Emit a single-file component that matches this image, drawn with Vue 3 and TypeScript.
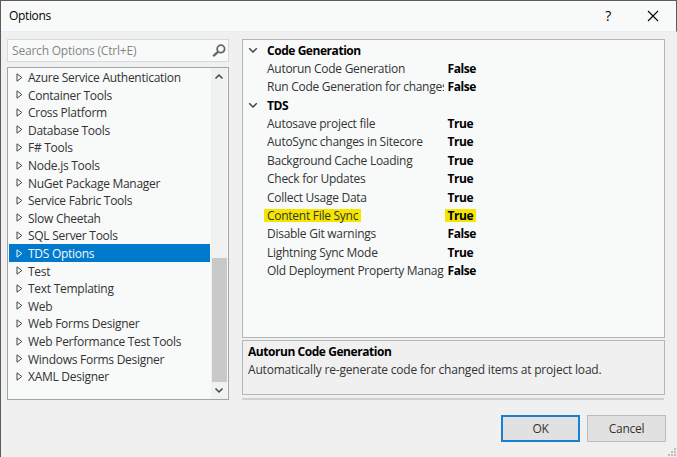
<script setup lang="ts">
interface Property { name: string; value?: string; group?: boolean; marked?: boolean }

const categories: string[] = [
  'Azure Service Authentication', 'Container Tools', 'Cross Platform', 'Database Tools', 'F# Tools',
  'Node.js Tools', 'NuGet Package Manager', 'Service Fabric Tools', 'Slow Cheetah', 'SQL Server Tools',
  'TDS Options', 'Test', 'Text Templating', 'Web', 'Web Forms Designer', 'Web Performance Test Tools',
  'Windows Forms Designer', 'XAML Designer',
]
const selected = 'TDS Options'

const properties: Property[] = [
  { name: 'Code Generation', group: true },
  { name: 'Autorun Code Generation', value: 'False' },
  { name: 'Run Code Generation for changes', value: 'False' },
  { name: 'TDS', group: true },
  { name: 'Autosave project file', value: 'True' },
  { name: 'AutoSync changes in Sitecore', value: 'True' },
  { name: 'Background Cache Loading', value: 'True' },
  { name: 'Check for Updates', value: 'True' },
  { name: 'Collect Usage Data', value: 'True' },
  { name: 'Content File Sync', value: 'True', marked: true },
  { name: 'Disable Git warnings', value: 'False' },
  { name: 'Lightning Sync Mode', value: 'True' },
  { name: 'Old Deployment Property Manag', value: 'False' },
]
</script>

<template>
  <div class="dialog">
    <header class="titlebar">
      <span class="title">Options</span>
      <span class="help">?</span>
      <svg class="close" width="12" height="12" viewBox="0 0 12 12"><path d="M1 1 11 11M11 1 1 11" /></svg>
    </header>
    <main class="content">
      <section class="left">
        <div class="search">
          <span>Search Options (Ctrl+E)</span>
          <svg width="14" height="14" viewBox="0 0 14 14"><circle cx="8.9" cy="4.9" r="3.7" /><path d="M6.3 7.6 1.2 12.2" /></svg>
        </div>
        <div class="tree">
          <ul class="items">
            <li v-for="c in categories" :key="c" :class="{ selected: c === selected }">
              <svg width="7" height="9" viewBox="0 0 7 9"><path d="M1 .8V8.2L5.8 4.5Z" /></svg>
              <span>{{ c }}</span>
            </li>
          </ul>
          <div class="scrollbar">
            <svg class="arrow" width="10" height="7" viewBox="0 0 10 7"><path d="M1.5 5.5 5 2 8.5 5.5" /></svg>
            <div class="thumb"></div>
            <svg class="arrow" width="10" height="7" viewBox="0 0 10 7"><path d="M1.5 1.5 5 5 8.5 1.5" /></svg>
          </div>
        </div>
      </section>
      <section class="right">
        <div class="grid">
          <div v-for="p in properties" :key="p.name" class="prop" :class="{ group: p.group }">
            <span class="gutter">
              <svg v-if="p.group" width="10" height="7" viewBox="0 0 10 7"><path d="M1.2 1.3 5 5 8.8 1.3" /></svg>
            </span>
            <span class="name"><span :class="{ mark: p.marked }">{{ p.name }}</span></span>
            <span v-if="p.value" class="value"><span :class="{ mark: p.marked }">{{ p.value }}</span></span>
          </div>
        </div>
        <div class="description">
          <strong>Autorun Code Generation</strong>
          <p>Automatically re-generate code for changed items at project load.</p>
        </div>
        <div class="rule"></div>
        <div class="buttons">
          <button class="ok">OK</button>
          <button>Cancel</button>
        </div>
      </section>
    </main>
    <svg class="grip" width="9" height="9" viewBox="0 0 9 9"><path d="M6 0h2v2h-2zM3 3h2v2h-2zM6 3h2v2h-2zM0 6h2v2h-2zM3 6h2v2h-2zM6 6h2v2h-2z" /></svg>
  </div>
</template>

<style>
body { overflow: hidden; }
</style>

<style scoped>
* { box-sizing: border-box; }
.dialog {
  position: relative; width: 677px; height: 457px; background: #f0f0f0; color: #333;
  border-top: 1px solid #5c5c5c; border-left: 1px solid #5c5c5c;
  font: 12px/17.6px "Open Sans", "Noto Sans", sans-serif; letter-spacing: -0.27px;
}
svg { flex: none; display: block; }
path, circle { fill: none; stroke: #444; stroke-width: 1.5; }
.titlebar {
  display: flex; align-items: center; height: 31px; padding: 0 17px 0 8px;
  background: #f8fafa; border-bottom: 1px solid #e8edf1; border-right: 1px solid #5c5c5c; color: #000;
}
.title { flex: 1; letter-spacing: -0.35px; }
.help { margin-right: 36px; font-size: 14px; }
.close path { stroke: #000; stroke-width: 1.1; }
.content { display: flex; padding-left: 6px; }
.left { width: 222px; padding-top: 7px; }
.search {
  display: flex; align-items: center; justify-content: space-between; height: 23px;
  padding: 0 2px 0 4px; background: #f8fafa; border: 1px solid #d5dae2; color: #858585; letter-spacing: -0.2px;
}
.search circle { stroke: #666; stroke-width: 1.8; }
.search path { stroke: #666; stroke-width: 2.4; }
.tree { display: flex; justify-content: space-between; height: 333px; margin-top: 5px; background: #f8f9f9; border: 1px solid #a0a5aa; }
.items { width: 202px; margin: 0; padding: 0.4px 0 0 1px; list-style: none; }
.items li { display: flex; align-items: center; height: 17.6px; padding-left: 7px; gap: 5px; white-space: nowrap; }
.items li span { padding-top: 1.4px; }
.items path { stroke-width: 1; }
.items .selected { background: #007acc; color: #f4f8fb; }
.items .selected path { stroke: #f4f8fb; }
.scrollbar { display: flex; flex-direction: column; align-items: center; width: 16px; padding: 5px 0; margin-right: 1px; background: #f0f1f1; }
.thumb { width: 15px; height: 124px; margin: auto 0 5px; background: #c9c9c9; }
.right { width: 423px; margin-left: 13px; padding-top: 7px; }
.grid { height: 299px; padding-top: 1.5px; background: #f8fafa; border: 1px solid #b4b7ba; }
.prop { display: flex; height: 18.4px; line-height: 18.4px; white-space: nowrap; }
.gutter { display: flex; align-items: center; width: 24px; padding-left: 4.5px; }
.gutter svg { margin-top: -1px; }
.name { width: 180px; margin-left: -3px; padding-left: 3px; overflow: hidden; }
.value { margin-left: 3.5px; }
.value, .group .name, strong { color: #000; font-weight: 700; letter-spacing: -0.45px; }
.mark { display: inline-block; height: 13px; line-height: 13px; margin-left: -3px; padding: 0 3px; background: #f5e600; }
.description { height: 55px; margin-top: 2px; padding: 2px 5px; border: 1px solid #b4b7ba; }
strong { display: block; }
p { margin: 0; letter-spacing: -0.19px; }
.rule { width: 422px; height: 2px; margin-top: 3px; background: #cfcfcf; }
.buttons { display: flex; justify-content: flex-end; gap: 7px; margin: 15px -1px 0 0; }
button { width: 79px; height: 27px; padding: 0; font: inherit; letter-spacing: inherit; color: #333; background: #e1e1e1; border: 1px solid #bcbcbc; }
.ok { border: 2px solid #1681d2; }
.grip { position: absolute; right: 0; bottom: 0; }
.grip path { fill: #bdbdbd; stroke: none; }
</style>
